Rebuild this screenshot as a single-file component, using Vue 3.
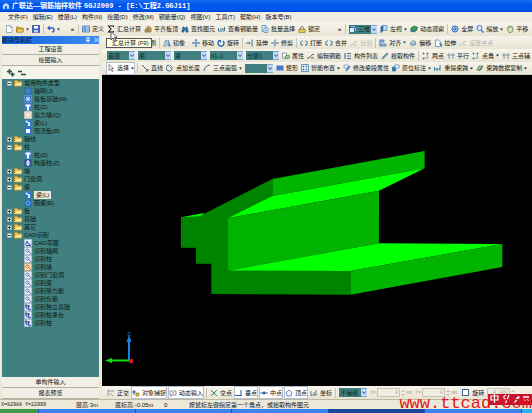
<script setup>
import { ref } from 'vue'

const menus = ['文件(F)', '编辑(E)', '楼层(L)', '构件(N)', '绘图(D)', '修改(M)', '钢筋量(Q)', '视图(V)', '工具(T)', '帮助(H)', '版本号(B)']

// Each icon is a list of [path, fill, stroke] drawn on an 8 x 8 grid.
const icons = {
  fresh: [['M1.5 .5h4l1.5 1.5v5.500h-5.500z', '#fff', '#7b8da8'], ['M5 .5v2h2', 'none', '#7b8da8']],
  open: [['M.5 7V2h2.500l1 1h3v4z', '#e8b53c', '#9c7420'], ['M.5 7l1.500-3h6L6.500 7z', '#ffd86c', '#9c7420']],
  save: [['M.5 .5h7v7h-7z', '#3f68c8', '#234494'], ['M2 1h4v2.500H2z', '#fff', 'none'], ['M2 5h4v2.500H2z', '#b8ccf0', 'none']],
  undo: [['M2 3h3q2 0 2 2t-2 2', 'none', '#2f62c4', 1.4], ['M0 3l3-2.500v5z', '#2f62c4', 'none']],
  define: [['M.5 1h7v6h-7z', '#d6e8ff', '#2c62b0'], ['M.5 3h7M.5 5h7M3 1v6', 'none', '#2c62b0']],
  sum: [['M6.500 2V1h-5L4 4 1.500 7h5V6', 'none', '#222', 1.1]],
  align: [['M1 5l3-4 3 2v4H1z', '#e3b34d', '#7b5a20'], ['M2 5h4M4 3v4', 'none', '#405878']],
  find: [['M1 6L2 2h1l.5 2h1L5 2h1l1 4v1H5V5H3v2H1z', '#397bb0', '#194e86']],
  rebar: [['M.5 3v3h6V2M2 4h4', 'none', '#3d789c', 1]],
  batch: [['M1 .5h4v6H1z', '#dbeaff', '#4679b5'], ['M3 3h4v4.500H3z', '#fff', '#4679b5'], ['M4 5h2M4 6h2', 'none', '#4679b5']],
  lock: [['M2.500 4V2.500q1.500-3 3 0V4', 'none', '#777', 1], ['M1 4h6v3.500H1z', '#e0c64f', '#8c7524']],
  cube: [['M.5 2.500h5v5h-5z', '#d9efff', '#1c5d8a'], ['M.5 2.500l2-2h5l-2 2zM5.500 7.500l2-2v-5l-2 2z', '#8cc1e8', '#1c5d8a']],
  left: [['M1 2l2-1.500v5L1 7.500z', '#2c69b6', '#174a88'], ['M3 .5h4v5H3z', '#b8dcf4', '#4785b8']],
  orbit: [['M1 3l3-2 3 1v3L4 7 1 6z', '#3c9a55', '#1a6838'], ['M0 6q5 1 8-4', 'none', '#336ec0', 1]],
  full: [['M1 4a3 3 0 1 0 6 0a3 3 0 1 0-6 0', '#c8e0ff', '#2868b8', 1], ['M4 2v4M2 4h4', 'none', '#2868b8', 1]],
  zoom: [['M1 3a2.500 2.500 0 1 0 5 0a2.500 2.500 0 1 0-5 0', '#dcecff', '#3a77b8', 1], ['M5 5l2.500 2.500', 'none', '#3a77b8', 1.2]],
  hand: [['M1 4l1-2 1 1V1h1l.5 1L6 1v2l1 0v3L5 7.500H3z', '#cfe3b2', '#5a7a46']],
  mirror: [['M3 1L.5 7H3z', '#fff', '#4779a8'], ['M5 1l2.500 6H5z', '#83b7dd', '#4779a8']],
  move: [['M4 .5v7M.5 4h7M3 1.500L4 .5l1 1M3 6.500l1 1 1-1M1.500 3l-1 1 1 1M6.500 3l1 1-1 1', 'none', '#376fa6', .9]],
  rotate: [['M2 2a3 3 0 1 0 4 0', 'none', '#2a64b8', 1.4], ['M1 1h3v3z', '#2a64b8', 'none']],
  extend: [['M0 4h4M3 3l1 1-1 1M6 .5v7', 'none', '#357090', 1]],
  trim: [['M0 4h3M5 4h3M4 .5v7', 'none', '#357090', 1]],
  brk: [['M1 2v4M1 6h2M5 6h2M7 6V2M2 2h1M5 2h1', 'none', '#357090', 1]],
  pen: [['M1 7l1-2 4-4 1 1-4 4z', '#71b2d6', '#376b92']],
  alignr: [['M1 .5v7', 'none', '#356ba6', 1], ['M2 1h3v2H2zM2 5h5v2H2z', '#9cc7ec', '#356ba6']],
  offset: [['M1 5l2-3h3l1 3-3 2z', '#bed2e2', '#5b7d98'], ['M1 5h6', 'none', '#5b7d98']],
  page: [['M1.500 1h3l2 2v4.500h-5z', '#fff', '#3a79b8'], ['M5 5h2.500v2.500', 'none', '#3a79b8', 1]],
  prop: [['M.5 1h4v5h-4z', '#fff', '#5e7d66'], ['M3 4l4-1 .5 3-4 1z', '#a9c78a', '#5e7d66']],
  line: [['M1 1l5.500 5.500M5 7h2V5', 'none', '#3c586c', 1]],
  edit: [['M0 6h2l4-4 1 1M4 6h3', 'none', '#3f6b6a', 1]],
  list: [['M1 1v6M3 1.500h4M3 4h4M3 6.500h4', 'none', '#4777a0', 1.2]],
  points: [['M1 1h1v1H1zM5 1h1v1H5zM1 6h1v1H1z', '#2f6696', '#2f6696'], ['M2 6h4L5 2', 'none', '#7c9aac', .8]],
  par: [['M2 1v6M6 1v6M0 3h8', 'none', '#68849a', .8]],
  cursor: [['M2 .5v6l1.500-1.500L5 7.500l1-.5-1.500-2.500H6.500z', '#fff', '#555']],
  len: [['M3 1a3 3 0 1 0 3 4', 'none', '#4b6180', 1], ['M3 2l3 3M4 1l3 3', 'none', '#4b6180']],
  arc: [['M1 7Q1.500 2 7 1', 'none', '#40617e', 1]],
  rect: [['M.5 1.500h7v5h-7z', '#4679cc', '#9ab5df']],
  smart: [['M.5 .5h7v7h-7z', '#e5f4ff', '#33739c'], ['M2 2h1v1H2zM5 2h1v1H5zM2 5h1v1H2zM5 5h1v1H5z', '#33739c', '#33739c']],
  brush: [['M1 1h4v3H1z', '#e6f0fa', '#6b93b8'], ['M3 7l4-5', 'none', '#3a77b6', 1.4]],
  mark: [['M.5 3h3v4h-3z', '#2d80c3', '#1f5f99'], ['M3 1h4v3H3z', '#fff', '#3a77b6']],
  span: [['M.5 7V3M3 7V4M6 7V1M.5 5h6', 'none', '#4c83aa', 1.1]],
  copy: [['M1 6l2-4h4L5 6z', '#a5cf9b', '#41783c'], ['M3 7l3-4', 'none', '#3a5fb6', 1]],
  ortho: [['M1 1v6M1 2h6M3 4l3 3', 'none', '#889', .9]],
  snap: [['M0 3h4M2 1v5', 'none', '#2b58a8', 1], ['M4 4h3v3H4z', '#f0c23f', '#8c6d1e']],
  dyn: [['M1 2h6v4H1z', '#fff', '#667'], ['M2 6v1.500M4 3v2', 'none', '#445']],
  cross: [['M1 1l6 6M7 1L1 7', 'none', '#37808e', 1]],
  perp: [['M0 6.500h7M6 1v5.500', 'none', '#2a5cb0', 1]],
  mid: [['M0 4h8', 'none', '#2a5cb0', .9], ['M3 3h2v2H3z', '#2a5cb0', '#2a5cb0']],
  apex: [['M4 1l3 2.500L6 7H2L1 3.500z', '#eef4ff', '#2a5cb0']],
  grid: [['M1 7V2M1 6h6M4 6V3M6 6V1', 'none', '#568', .8]],
  folder: [['M.5 7V1.500h2.500l1 1h3.500V7z', '#f7ce56', '#b98c27'], ['M.5 7l1-3.500H8L7 7z', '#ffe690', '#d4a83e']],
  axis: [['M1 1h6v6H1z', '#3471bd', '#285d9f'], ['M3 1v6M5 1v6M1 3h6M1 5h6', 'none', '#5f9ad8', .5]],
  raft: [['M.5 .5h7v7h-7z', '#2768c6', '#5aa0ea'], ['M2 4a2 2 0 1 0 4 0a2 2 0 1 0-4 0M2 2l4 4M6 2L2 6', 'none', '#e6f2ff', .8]],
  column: [['M.5 .5h7v7h-7z', '#3d7fce', 'none'], ['M1.500 1.500h5v2h-1.500v4H3v-4H1.500z', '#fff', 'none']],
  wall: [['M.5 .5h7v7h-7z', '#f6eadf', '#d9c7b8'], ['M2 2h4v4H2z', '#fff7f0', '#d7b8a0']],
  beam: [['M.5 .5h7v7h-7z', '#2e79c8', 'none'], ['M1 3l2-2 1 2h2v4H4V4z', '#d8ecff', 'none']],
  slab: [['M.5 .5h7v7h-7z', '#2c6fd8', 'none'], ['M2 2h4v4H2z', '#fff', 'none']],
  tie: [['M.5 .5h7v7h-7z', '#274f9e', 'none'], ['M4 1v6M2 3h4M2 5h4', 'none', '#fff', 1.2]],
  ring: [['M.5 .5h7v7h-7z', '#276fbc', 'none'], ['M2 4a2 2 0 1 0 4 0a2 2 0 1 0-4 0', 'none', '#5fb4ea', 1]],
  cad: [['M.5 .5h7v7h-7z', '#eef2fa', '#b8c4dc'], ['M1.500 6L3 2l1.500 3h2M2 6.500h5', 'none', '#2b4fa8', 1]],
  scan: [['M.5 .5h7v7h-7z', '#eef2fa', '#b8c4dc'], ['M2 3.500a1.500 1.500 0 1 0 3 0a1.500 1.500 0 1 0-3 0M5 5l2 2', 'none', '#4863a8', .9]],
  scanw: [['M.5 .5h7v7h-7z', '#fbe3c4', '#d8a878'], ['M2 3.500a1.500 1.500 0 1 0 3 0a1.500 1.500 0 1 0-3 0M5 5l2 2', 'none', '#a86838', .9]],
  scanb: [['M.5 .5h7v7h-7z', '#e8edf8', '#b8c4dc'], ['M1 3h5M2 1v4l5 2M4 2l1 4', 'none', '#273f98', 1]]
}

const b = (icon, label, opt = {}) => ({ kind: 'button', icon, label, ...opt })
const c = (label, options, size, opt = {}) => ({ kind: 'combo', label, options, size, ...opt })
const sep = { kind: 'sep' }
const gap = { kind: 'gap' }
const more = { kind: 'more' }
const drop = { drop: true }
const off = { disabled: true }
const on = { on: true }

const mainBar = [
  b('fresh', ''), b('open', '', drop), b('save', ''), sep, b('undo', '', drop), gap, more, sep,
  b('define', '定义'), b('sum', '汇总计算'), b('align', '平齐板顶'), b('find', '查找图元'), b('rebar', '查看钢筋量'),
  b('batch', '批量选择'), b('lock', '锁定'), gap, gap, more, sep,
  c('视图方式', '三维', 'small', { icon: 'cube' }), b('left', '左视', drop), b('orbit', '动态观察'), sep,
  b('full', '全屏'), b('zoom', '缩放', drop), b('hand', '平移')
]

const toolBars = [
  [b('cross', ''), b('batch', ''), b('pen', ''), b('brush', '刷'), sep, b('mirror', '镜像'), gap, b('move', '移动'), b('rotate', '旋转'), sep,
    b('extend', '延伸'), b('trim', '修剪'), sep, b('brk', '打断'), b('brk', '合并'), b('edit', '分割', off), sep,
    b('alignr', '对齐', drop), b('offset', '偏移'), b('page', '拉伸'), b('edit', '设置夹点', off)],
  [c('楼层', '首层', 'medium'), c('构件类型', '梁', 'large'), c('构件种类', '梁', 'large'), c('构件名称', 'KL-1', 'large'), c('分层', '分层1', 'large'),
    b('prop', '属性'), b('edit', '编辑钢筋'), b('list', '构件列表'), b('pen', '拾取构件'), sep,
    b('points', '两点'), b('par', '平行'), b('points', '点角', drop), b('par', '三点辅')],
  [b('cursor', '选择', { drop: true, on: true }), sep, b('line', '直线'), b('len', '点加长度'), b('arc', '三点画弧', drop),
    c('绘制方式', '', 'small'), b('rect', '矩形'), b('smart', '智能布置', drop), b('brush', '修改梁段属性'),
    b('mark', '原位标注', drop), b('span', '重提梁跨', drop), b('copy', '梁跨数据复制', drop)]
]

const snapBar = [
  b('ortho', '正交'), b('snap', '对象捕捉', on), b('dyn', '动态输入', on), sep, b('cross', '交点'), b('perp', '垂点', on),
  b('mid', '中点', on), b('apex', '顶点', on), b('grid', '坐标'), sep, c('偏移方式', '不偏移', 'small')
]

const tree = [
  { label: '常用构件类型', open: true, kids: [['axis', '轴网(J)'], ['raft', '筏板基础(M)'], ['column', '柱(Z)'], ['wall', '剪力墙(Q)'], ['beam', '梁(L)'], ['slab', '现浇板(B)']] },
  { label: '轴线' },
  { label: '柱', open: true, kids: [['column', '柱(Z)'], ['tie', '构造柱(Z)']] },
  { label: '墙' },
  { label: '门窗洞' },
  { label: '梁', open: true, kids: [['beam', '梁(L)', true], ['ring', '圈梁(E)']] },
  { label: '板' },
  { label: '基础' },
  { label: '其它' },
  { label: 'CAD识别', open: true, kids: [['cad', 'CAD草图'], ['scan', '识别轴网'], ['scan', '识别柱'], ['scanw', '识别墙'], ['scan', '识别门窗洞'], ['scan', '识别梁'], ['scan', '识别受力筋'], ['scan', '识别负筋'], ['scanb', '识别独立基础'], ['scanb', '识别桩承台'], ['scanb', '识别桩']] }
]

const offsets = ref([{ axis: 'X=', value: '0' }, { axis: 'Y=', value: '0' }])
const angle = ref('0.000')
const rotated = ref(false)

const bars = [mainBar, ...toolBars, snapBar]
const barClass = ['main-bar', 'row-a', 'row-b', 'row-c', 'snap-bar']
</script>

<template>
  <div class="app">
    <header class="title">
      <svg class="logo" viewBox="0 0 8 8"><path d="M1 7V3l3-2 3 2v4H5V4H3v3z" fill="#d9ecff" stroke="#58a0f0" stroke-width=".6" /></svg>
      <h1>广联达—钢筋抽样软件 <span>GGJ2009 - [E:\工程2.GGJ11]</span></h1>
    </header>
    <nav class="menu"><button v-for="m in menus" :key="m" type="button">{{ m }}</button></nav>

    <div class="layout">
      <div v-for="(bar, n) in bars" :key="n" class="bar" :class="barClass[n]" role="toolbar">
        <template v-for="(it, k) in bar" :key="k">
          <i v-if="it.kind === 'sep'" class="sep"></i>
          <i v-else-if="it.kind === 'gap'" class="gap"></i>
          <button v-else-if="it.kind === 'more'" type="button" class="more">»</button>
          <label v-else-if="it.kind === 'combo'" class="combo" :class="it.size">
            <svg v-if="it.icon" class="icon" viewBox="0 0 8 8"><path v-for="(p, j) in icons[it.icon]" :key="j" :d="p[0]" :fill="p[1]" :stroke="p[2]" :stroke-width="p[3] || 0.7" /></svg>
            <select :aria-label="it.label"><option>{{ it.options }}</option></select>
            <svg class="arrow" viewBox="0 0 6 8"><path d="M0 0h6v8H0z" fill="#c5d6fc" /><path d="M1.500 3L3 5l1.500-2" fill="none" stroke="#35507c" /></svg>
          </label>
          <button v-else type="button" class="tool" :class="{ on: it.on }" :disabled="it.disabled" :aria-label="it.label || it.icon">
            <svg class="icon" viewBox="0 0 8 8"><path v-for="(p, j) in icons[it.icon]" :key="j" :d="p[0]" :fill="p[1]" :stroke="p[2]" :stroke-width="p[3] || 0.7" /></svg>
            <span v-if="it.label">{{ it.label }}</span>
            <svg v-if="it.drop" class="drop" viewBox="0 0 3 3"><path d="M0 .5h3L1.500 2.500z" fill="#222" /></svg>
          </button>
        </template>
        <template v-if="n === 4">
          <label v-for="o in offsets" :key="o.axis" class="field">
            {{ o.axis }}<input v-model="o.value" disabled />
            <svg class="spin" viewBox="0 0 4 8"><path d="M0 3l2-2 2 2zM0 5l2 2 2-2z" fill="#c2bfae" /></svg>mm
          </label>
          <label class="check"><input v-model="rotated" type="checkbox" />旋转</label>
          <label class="field"><input v-model="angle" aria-label="旋转角度" disabled />
            <svg class="spin" viewBox="0 0 4 8"><path d="M0 3l2-2 2 2zM0 5l2 2 2-2z" fill="#c2bfae" /></svg>
          </label>
        </template>
        <div v-if="n === 1" class="tip">
          汇总计算 (F9)
          <svg class="pointer" viewBox="0 0 8 11"><path d="M1 .5v8.500l2-2L4.500 10.500l1.500-.5L4.500 6.500h2.500z" fill="#fff" stroke="#333" stroke-width=".8" /></svg>
        </div>
      </div>

      <aside class="side">
        <div class="side-head">
          <h2>模块导航栏</h2>
          <svg viewBox="0 0 14 8"><path d="M2 1.500h2v3H2zM1 4.500h4M3 4.500V7M9.500 2l4 4M13.500 2l-4 4" fill="none" stroke="#e4efff" /></svg>
        </div>
        <button type="button" class="fold">工程设置</button>
        <button type="button" class="fold">绘图输入</button>
        <div class="expand">
          <svg viewBox="0 0 22 9"><path d="M3 3.500h5M5.500 1v5M6.500 6.500h4M8.500 4.500v4M14 3.500h4M17 6.500h5" fill="none" stroke="#1d5340" stroke-width="1.6" /></svg>
        </div>
        <ul class="tree">
          <li v-for="g in tree" :key="g.label">
            <div class="node">
              <svg class="box" viewBox="0 0 5 5"><path d="M.5 .5h4v4h-4z" fill="#e8eee8" stroke="#9ab" stroke-width=".6" /><path :d="g.open ? 'M1 2.500h3' : 'M1 2.500h3M2.500 1v3'" stroke="#223" stroke-width=".8" /></svg>
              <svg class="icon" viewBox="0 0 8 8"><path v-for="(p, j) in icons.folder" :key="j" :d="p[0]" :fill="p[1]" :stroke="p[2]" stroke-width=".6" /></svg>
              <span>{{ g.label }}</span>
            </div>
            <ul v-if="g.kids">
              <li v-for="k in g.kids" :key="k[1]" class="node leaf">
                <svg class="icon" viewBox="0 0 8 8"><path v-for="(p, j) in icons[k[0]]" :key="j" :d="p[0]" :fill="p[1]" :stroke="p[2]" :stroke-width="p[3] || 0.7" /></svg>
                <span :class="{ picked: k[2] }">{{ k[1] }}</span>
              </li>
            </ul>
          </li>
        </ul>
        <button type="button" class="fold">单构件输入</button>
        <button type="button" class="fold">报表预览</button>
      </aside>

      <main class="view">
        <svg class="scene" viewBox="0 0 430 310" preserveAspectRatio="xMinYMin meet">
          <g transform="translate(68 65) scale(.3333)">
            <path d="M33 232L103 219 85 240H33z" fill="#00ff00" />
            <path d="M33 232L88 229 307 117V168L172 235V392L541 393V464L124 462V371H78V323H33z" fill="#008400" />
            <path d="M307 117L764 33V85L307 168z" fill="#00b400" />
            <path d="M307 168L764 85 627 152 172 235z" fill="#00ff00" />
            <path d="M172 235L627 152V310L172 392z" fill="#00b400" />
            <path d="M172 392L627 310 997 312 541 393z" fill="#00ff00" />
            <path d="M541 393L997 312V381L541 464z" fill="#00b400" />
          </g>
          <path d="M27 285V266" stroke="#1a80f0" stroke-width="2" />
          <path d="M27 260l2.500 7h-5z" fill="#1a80f0" />
          <path d="M25.500 257.500h3l-3 3h3" fill="none" stroke="#1a56a0" stroke-width=".8" />
          <path d="M27 285.500H9" stroke="#10e010" stroke-width="2" />
          <path d="M3 285.500l7-2.500v5z" fill="#10e010" />
          <path d="M27 284h4v4h-4z" fill="#e01030" />
        </svg>
      </main>
    </div>

    <footer class="status">
      <span class="pos">X=82988 Y=22999</span><span class="floor">层高:3m</span><span class="level">底标高:-0.05m</span><span class="count">0</span>
      <span>按鼠标左键指定第一个角点，或拾取构件图元</span>
    </footer>
    <div class="taskbar"><i class="start"></i><i></i><i></i><i></i><i class="active"></i><i></i><i class="tray"></i></div>

    <div class="badge">
      <svg viewBox="0 0 44 11"><path d="M3 2h7v4H3zM6.500 0v9M18 1q-4 2-1 4t0 4M21 1l-2 5" fill="none" stroke="#fff" stroke-width="1.200" /><path d="M25 8l5-6 2 1-5 6z" fill="#fff" /><path d="M35 3h6M35 6h6" stroke="#fff" stroke-width="1.400" /></svg>
    </div>
    <div class="watermark">www.ttcad.com</div>
  </div>
</template>

<style>
body { overflow: hidden; }
</style>

<style scoped>
* { box-sizing: border-box; }
.app {
  position: relative;
  display: flex;
  flex-direction: column;
  height: 100vh;
  overflow: hidden;
  background: #ece9d8;
  color: #111;
  font: 6px/8px "Liberation Sans", "Noto Sans CJK SC", sans-serif;
  white-space: nowrap;
}
button, input, select { font: inherit; color: inherit; }
button { margin: 0; padding: 0; border: 0; background: none; }
h1, h2, ul { margin: 0; padding: 0; font: inherit; list-style: none; }
svg { display: block; flex: none; }

.title {
  display: flex;
  align-items: center;
  gap: 2px;
  height: 12px;
  flex: none;
  padding-left: 2px;
  background: linear-gradient(#1a6cf4, #0055ea 40%, #0058f0 80%, #0040c8);
  color: #fff;
}
.title h1 { font-size: 7px; font-weight: bold; line-height: 12px; }
.title h1 span { font-family: "Liberation Mono", "Noto Sans CJK SC", monospace; }
.logo { width: 8px; height: 8px; }
.menu { display: flex; gap: 5px; height: 10px; flex: none; padding-left: 8px; background: #f0eee2; }

.layout {
  display: grid;
  grid-template: 14px 13px 13px 13px minmax(0, 1fr) 13px / 102px minmax(0, 1fr);
  flex: 1;
  min-height: 0;
}
.bar {
  grid-column: 2;
  position: relative;
  display: flex;
  align-items: center;
  gap: 3px;
  min-width: 0;
  padding-left: 5px;
  background: linear-gradient(#f6f4ec, #e9e5d4);
}
.main-bar { grid-area: 1 / 1 / 2 / 3; }
.row-a { grid-row: 2; }
.row-b { grid-row: 3; }
.row-c { grid-row: 4; border-bottom: 1px solid #d0ccbb; }
.snap-bar { grid-row: 6; }
.icon { width: 8px; height: 8px; }
.tool { display: flex; align-items: center; gap: 2px; flex: none; height: 11px; }
.tool:disabled { color: #b8b5a6; }
.tool:disabled .icon { opacity: .3; }
.tool.on { background: #fff; outline: 1px solid #b9bfc8; }
.drop { width: 3px; height: 3px; }
.sep { flex: none; width: 1px; height: 10px; background: #c9c5b2; }
.gap { flex: none; width: 4px; }
.row-a .gap { width: 1px; }
.more { flex: none; width: 5px; font-weight: bold; }
.combo { display: flex; flex: none; align-items: center; height: 9px; background: #408080; }
.combo select { flex: 1; min-width: 0; height: 9px; padding: 0 0 0 1px; border: 0; appearance: none; background: none; color: #0c2c2c; }
.arrow { width: 6px; height: 9px; }
.small { width: 28px; }
.medium { width: 28px; }
.large { width: 33px; }
.field, .check { display: flex; flex: none; align-items: center; gap: 1px; }
.field { color: #aaa797; font-family: "Liberation Mono", monospace; font-size: 5px; }
.field input { width: 23px; height: 9px; padding: 0 1px; border: 1px solid #c6c3b2; background: #f1efe4; text-align: right; }
.spin { width: 4px; height: 8px; }
.check input { appearance: none; width: 7px; height: 7px; margin: 0 2px; border: 1px solid #3c6494; background: #fff; }
.tip {
  position: absolute;
  top: 2px;
  left: 4px;
  z-index: 2;
  padding: 0 2px 0 5px;
  border: 1px solid #555;
  background: #ffffe1;
}
.pointer { position: absolute; left: 3px; top: -8px; width: 8px; height: 11px; }

.side {
  grid-area: 2 / 1 / 7 / 2;
  display: flex;
  flex-direction: column;
  min-height: 0;
  padding: 0 3px 0 2px;
}
.side-head { display: flex; justify-content: space-between; height: 8px; flex: none; background: linear-gradient(90deg, #1463dc, #3c8cf4); }
.side-head h2 { color: #0c2c68; font-weight: bold; }
.side-head svg { width: 14px; height: 8px; }
.fold { flex: none; height: 11px; border-bottom: 1px solid #b5b19e; background: #f1efe5; }
.expand { flex: none; height: 13px; padding: 2px; background: #f4f3ec; }
.expand svg { width: 22px; height: 9px; }
.tree { flex: 1; min-height: 0; padding-left: 5px; overflow: hidden; background: #408080; color: #0a1818; }
.node { display: flex; align-items: center; gap: 2px; height: 8px; }
.leaf { padding-left: 17px; }
.box { width: 5px; height: 5px; }
.picked { padding: 0 2px; background: #ece9d8; }

.view { grid-area: 5 / 2; min-height: 0; overflow: hidden; background: #000; }
.scene { width: 100%; }

.status { display: flex; align-items: center; height: 10px; flex: none; padding-left: 1px; border-top: 1px solid #bcb8a6; }
.pos { width: 75px; font-family: "Liberation Mono", monospace; font-size: 5px; }
.floor { width: 39px; }
.level { width: 49px; }
.count { width: 25px; }
.taskbar { display: flex; gap: 1px; height: 4px; flex: none; background: #1c50c0; }
.taskbar i { flex: 1; background: #3b83f0; }
.taskbar .start { flex: none; width: 38px; background: #3c9a4c; }
.taskbar .active { background: #1c4698; }
.taskbar .tray { flex: none; width: 10px; background: #2bb3ee; }

.badge { position: absolute; right: 0; bottom: 8px; width: 44px; height: 11px; background: #c8142c; }
.watermark { position: absolute; right: 0; bottom: 0; color: #e01818; font: 17px/18px "Liberation Mono", monospace; }
</style>
